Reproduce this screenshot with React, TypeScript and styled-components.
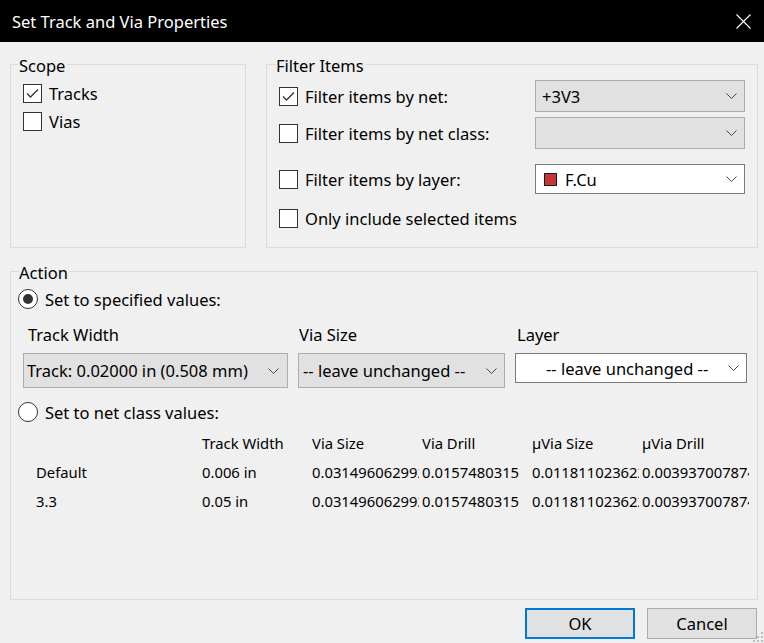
import styled, { createGlobalStyle } from 'styled-components';

const GlobalStyle = createGlobalStyle`
  html, body {
    margin: 0;
    background: #f0f0f0;
  }
  body {
    font-family: 'Noto Sans', 'Open Sans', sans-serif;
    font-size: 16.5px;
    color: #000;
  }
`

const Window = styled.div`
  width: 764px;
  height: 643px;
  display: flex;
  flex-direction: column;
  background: #f0f0f0;
  overflow: hidden;
`

const TitleBar = styled.div`
  height: 42px;
  flex: none;
  display: flex;
  align-items: center;
  padding: 0 13px 0 12px;
  background: #000;
  color: #fff;
  font-size: 16.5px;
`

const Title = styled.div`
  flex: 1;
`

const Body = styled.div`
  flex: 1;
  display: flex;
  flex-direction: column;
  padding: 22px 0 0 10px;
`

const TopRow = styled.div`
  display: flex;
  gap: 20px;
`

const Group = styled.div<{ $w: number; $h: number; $pad: number }>`
  box-sizing: border-box;
  width: ${p => p.$w}px;
  height: ${p => p.$h}px;
  border: 1px solid #dcdcdc;
  padding-left: ${p => p.$pad}px;
  display: flex;
  flex-direction: column;
`

const Legend = styled.div`
  width: fit-content;
  height: 22px;
  line-height: 22px;
  margin-top: -10px;
  padding-right: 2px;
  background: #f0f0f0;
`

const CheckRow = styled.div<{ $h: number; $mt: number }>`
  display: flex;
  align-items: center;
  gap: 7px;
  height: ${p => p.$h}px;
  margin-top: ${p => p.$mt}px;
`

const Box = styled.span`
  box-sizing: border-box;
  width: 19px;
  height: 19px;
  flex: none;
  border: 1px solid #333;
  background: #fff;
  display: flex;
  align-items: center;
  justify-content: center;
`

const ScopeList = styled.div`
  margin-left: 4px;
  display: flex;
  flex-direction: column;
`

const FilterList = styled.div`
  margin-left: 3px;
  display: flex;
  flex-direction: column;
`

const FilterRow = styled.div<{ $h: number; $mt: number }>`
  display: grid;
  grid-template-columns: 256px 210px;
  align-items: center;
  height: ${p => p.$h}px;
  margin-top: ${p => p.$mt}px;
`

const Combo = styled.div<{ $white?: boolean; $h: number; $pl: number; $pr: number }>`
  box-sizing: border-box;
  height: ${p => p.$h}px;
  display: flex;
  align-items: center;
  gap: 8px;
  padding: 0 ${p => p.$pr}px 0 ${p => p.$pl}px;
  background: ${p => (p.$white ? '#fff' : '#e1e1e1')};
  border: 1px solid ${p => (p.$white ? '#7a7a7a' : '#adadad')};
  white-space: nowrap;
`

const ComboText = styled.span`
  flex: 1;
  overflow: hidden;
`

const Swatch = styled.span`
  box-sizing: border-box;
  width: 13px;
  height: 13px;
  flex: none;
  background: #c93434;
  border: 1px solid #1a1a1a;
`

const ActionGroup = styled(Group)`
  margin-top: 23px;
`

const RadioRow = styled.div<{ $mt: number }>`
  display: flex;
  align-items: center;
  gap: 7px;
  height: 20px;
  margin-top: ${p => p.$mt}px;
  margin-left: -1px;
`

const Radio = styled.span<{ $on?: boolean }>`
  box-sizing: border-box;
  width: 20px;
  height: 20px;
  flex: none;
  border-radius: 50%;
  border: 1px solid #333;
  background: #fff;
  display: flex;
  align-items: center;
  justify-content: center;
  &::after {
    content: '';
    width: 10px;
    height: 10px;
    border-radius: 50%;
    background: #333;
    display: ${p => (p.$on ? 'block' : 'none')};
  }
`

const Fields = styled.div`
  display: grid;
  grid-template-columns: 265px 207px 232px;
  column-gap: 10px;
  margin: 15px 0 0 4px;
  align-items: start;
`

const FieldLabel = styled.div<{ $pl: number }>`
  height: 22px;
  line-height: 22px;
  padding-left: ${p => p.$pl}px;
  margin-bottom: 7px;
`

const Table = styled.div`
  display: grid;
  grid-template-columns: 164px repeat(5, 110px);
  grid-auto-rows: 29px;
  margin: 6px 0 0 17px;
  font-size: 14.8px;
`

const Cell = styled.div`
  display: flex;
  align-items: center;
  padding-left: 2px;
  margin-right: 1px;
  white-space: nowrap;
  overflow: hidden;
  &:nth-child(6n + 1) {
    padding-left: 0;
  }
`

const ButtonRow = styled.div`
  display: flex;
  justify-content: flex-end;
  gap: 12px;
  height: 35px;
  margin-top: 8px;
`

const Button = styled.button<{ $default?: boolean }>`
  box-sizing: border-box;
  width: 110px;
  height: 31px;
  padding: 0;
  font: inherit;
  color: #000;
  background: #e1e1e1;
  border: ${p => (p.$default ? '2px solid #0078d7' : '1px solid #adadad')};
`

const Grip = styled.svg`
  align-self: flex-end;
  margin-left: -16px;
`

const Chevron = () => (
  <svg width="11" height="6" viewBox="0 0 11 6" style={{ flex: 'none' }}>
    <polyline points="0.5,0.5 5.5,5.5 10.5,0.5" fill="none" stroke="#444" strokeWidth="1" />
  </svg>
)

const Check = ({ on }: { on?: boolean }) => (
  <Box>
    {on && (
      <svg width="15" height="15" viewBox="0 0 15 15">
        <polyline points="2,7.5 5.5,11 13,3.5" fill="none" stroke="#333" strokeWidth="1.3" />
      </svg>
    )}
  </Box>
)

const rows = [
  ['', 'Track Width', 'Via Size', 'Via Drill', 'µVia Size', 'µVia Drill'],
  ['Default', '0.006 in', '0.0314960629921', '0.0157480315', '0.0118110236220', '0.00393700787402'],
  ['3.3', '0.05 in', '0.0314960629921', '0.0157480315', '0.0118110236220', '0.00393700787402'],
]

export default function App() {
  return (
    <Window>
      <GlobalStyle />
      <TitleBar>
        <Title>Set Track and Via Properties</Title>
        <svg width="15" height="15" viewBox="0 0 15 15">
          <path d="M0.5,0.5 L14.5,14.5 M14.5,0.5 L0.5,14.5" stroke="#fff" strokeWidth="1.1" />
        </svg>
      </TitleBar>
      <Body>
        <TopRow>
          <Group $w={236} $h={184} $pad={8}>
            <Legend>Scope</Legend>
            <ScopeList>
              <CheckRow $h={28} $mt={2}>
                <Check on />
                Tracks
              </CheckRow>
              <CheckRow $h={28} $mt={0}>
                <Check />
                Vias
              </CheckRow>
            </ScopeList>
          </Group>
          <Group $w={492} $h={184} $pad={9}>
            <Legend>Filter Items</Legend>
            <FilterList>
              <FilterRow $h={32} $mt={3}>
                <CheckRow $h={32} $mt={0}>
                  <Check on />
                  Filter items by net:
                </CheckRow>
                <Combo $h={32} $pl={6} $pr={7}>
                  <ComboText>+3V3</ComboText>
                  <Chevron />
                </Combo>
              </FilterRow>
              <FilterRow $h={32} $mt={5}>
                <CheckRow $h={32} $mt={0}>
                  <Check />
                  Filter items by net class:
                </CheckRow>
                <Combo $h={32} $pl={6} $pr={7}>
                  <ComboText />
                  <Chevron />
                </Combo>
              </FilterRow>
              <FilterRow $h={30} $mt={15}>
                <CheckRow $h={30} $mt={0}>
                  <Check />
                  Filter items by layer:
                </CheckRow>
                <Combo $white $h={30} $pl={8} $pr={7}>
                  <Swatch />
                  <ComboText>F.Cu</ComboText>
                  <Chevron />
                </Combo>
              </FilterRow>
              <FilterRow $h={30} $mt={9}>
                <CheckRow $h={30} $mt={0}>
                  <Check />
                  Only include selected items
                </CheckRow>
              </FilterRow>
            </FilterList>
          </Group>
        </TopRow>

        <ActionGroup $w={748} $h={329} $pad={8}>
          <Legend>Action</Legend>
          <RadioRow $mt={5}>
            <Radio $on />
            Set to specified values:
          </RadioRow>
          <Fields>
            <div>
              <FieldLabel $pl={5}>Track Width</FieldLabel>
              <Combo $h={35} $pl={3} $pr={8}>
                <ComboText>Track: 0.02000 in (0.508 mm)</ComboText>
                <Chevron />
              </Combo>
            </div>
            <div>
              <FieldLabel $pl={1}>Via Size</FieldLabel>
              <Combo $h={35} $pl={4} $pr={7}>
                <ComboText>-- leave unchanged --</ComboText>
                <Chevron />
              </Combo>
            </div>
            <div>
              <FieldLabel $pl={2}>Layer</FieldLabel>
              <Combo $white $h={30} $pl={30} $pr={7}>
                <ComboText>-- leave unchanged --</ComboText>
                <Chevron />
              </Combo>
            </div>
          </Fields>
          <RadioRow $mt={14}>
            <Radio />
            Set to net class values:
          </RadioRow>
          <Table>
            {rows.map((r, i) => r.map((c, j) => <Cell key={i + '-' + j}>{c}</Cell>))}
          </Table>
        </ActionGroup>

        <ButtonRow>
          <Button $default>OK</Button>
          <Button>Cancel</Button>
          <Grip width="11" height="11" viewBox="0 0 11 11">
            <rect x="8" y="0" width="2" height="2" fill="#bcbcbc" />
            <rect x="4" y="4" width="2" height="2" fill="#bcbcbc" />
            <rect x="8" y="4" width="2" height="2" fill="#bcbcbc" />
            <rect x="0" y="8" width="2" height="2" fill="#bcbcbc" />
            <rect x="4" y="8" width="2" height="2" fill="#bcbcbc" />
            <rect x="8" y="8" width="2" height="2" fill="#bcbcbc" />
          </Grip>
        </ButtonRow>
      </Body>
    </Window>
  )
}
